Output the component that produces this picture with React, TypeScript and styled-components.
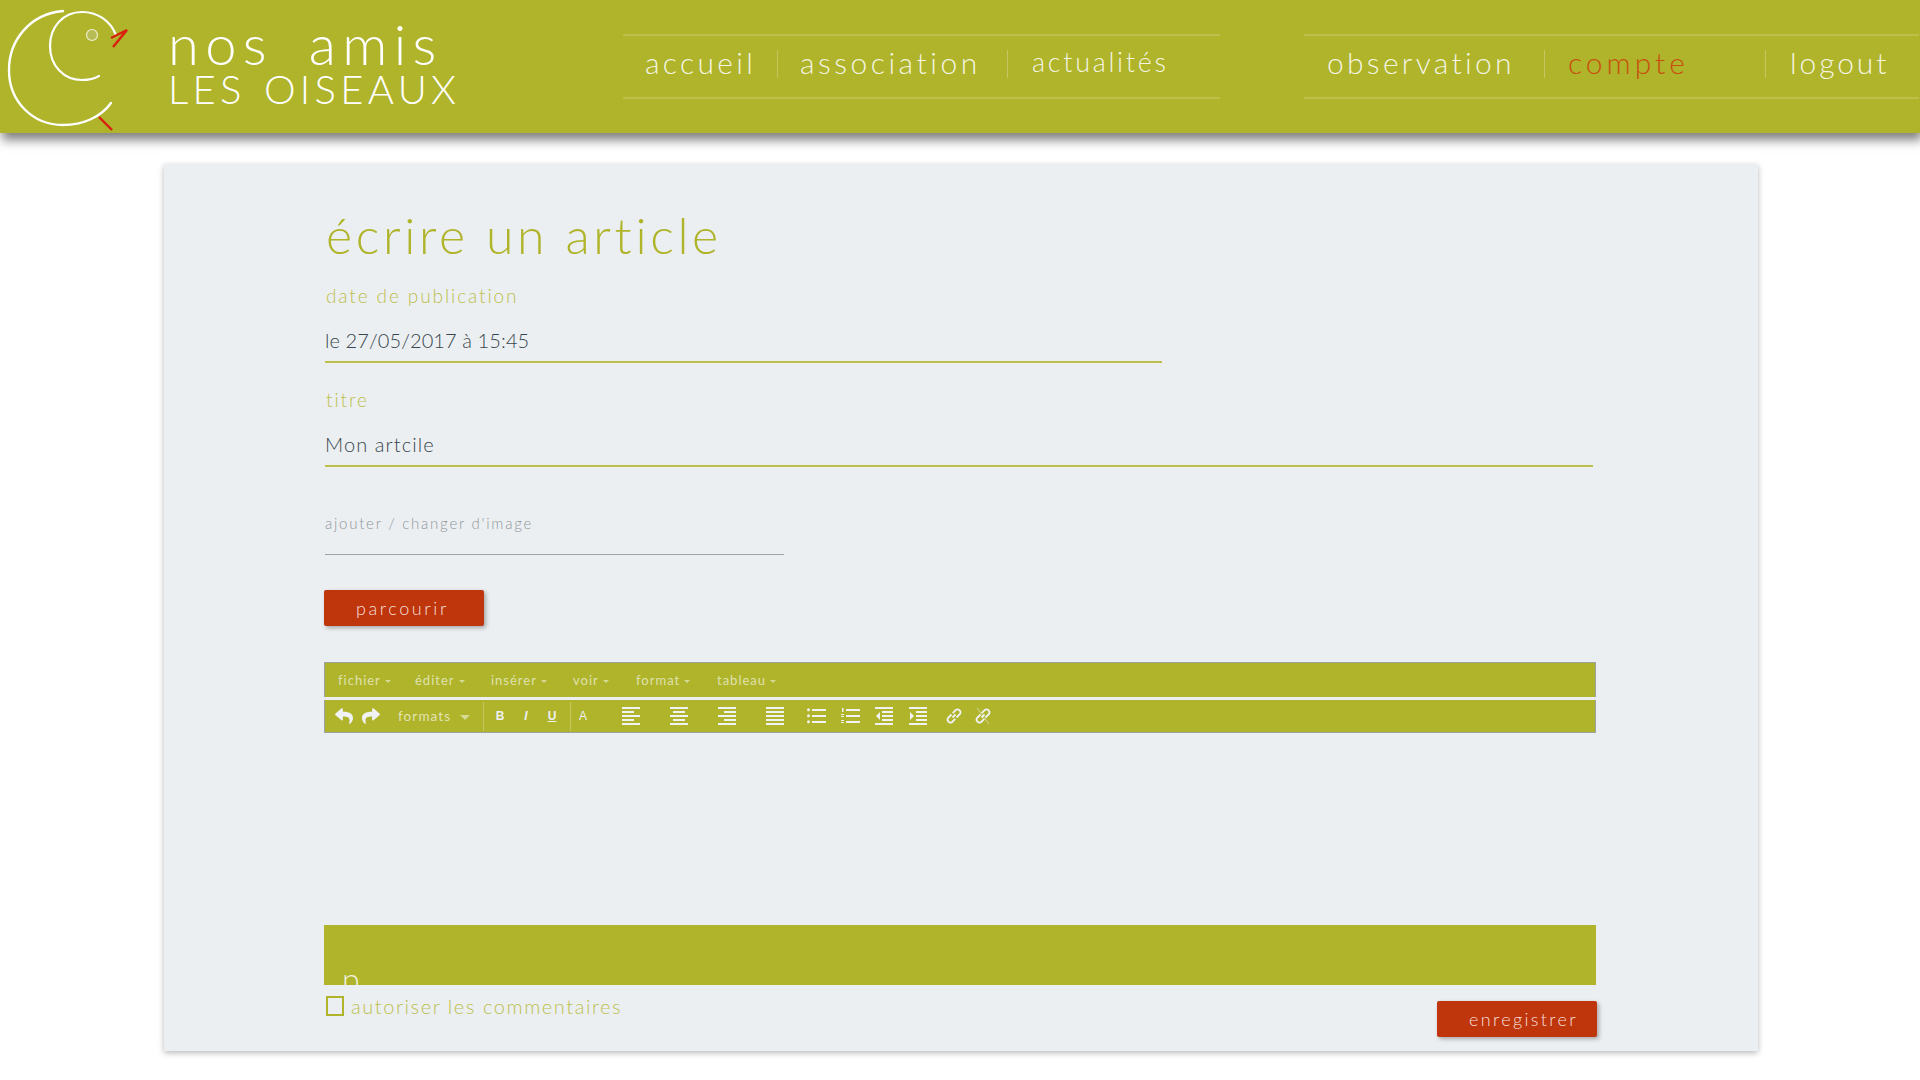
import React from "react";
import styled, { createGlobalStyle } from "styled-components";
import { FaReply, FaShare } from "react-icons/fa";

const olive = "#afb42b";
const red = "#bf360c";
const font = `"Lato", "Liberation Sans", sans-serif`;

const Global = createGlobalStyle`
  html, body { margin: 0; padding: 0; background: #fff; }
  body { font-family: ${font}; font-weight: 300; overflow: hidden; height: 1080px; }
  * { box-sizing: border-box; }
`;

const Header = styled.header`
  height: 133px;
  background: ${olive};
  box-shadow: 2px 7px 10px rgba(0, 0, 0, 0.5);
  display: flex;
  position: relative;
`;
const LogoMark = styled.svg`
  width: 140px;
  height: 133px;
  flex: none;
`;
const LogoText = styled.div`
  width: 483px;
  flex: none;
  padding: 19px 0 0 28px;
  color: #fff;
  font-weight: 300;
`;
const LogoLine1 = styled.div`
  font-size: 56px;
  line-height: 49px;
  height: 49px;
  letter-spacing: 6.4px;
  word-spacing: 14px;
`;
const LogoLine2 = styled.div`
  font-size: 40px;
  line-height: 42px;
  letter-spacing: 4.3px;
  word-spacing: 3px;
`;
const Nav = styled.nav<{ $w: number; $ml: number }>`
  width: ${(p) => p.$w}px;
  margin-left: ${(p) => p.$ml}px;
  height: 65px;
  margin-top: 34px;
  flex: none;
  display: flex;
  align-items: center;
  border-top: 2px solid rgba(255, 255, 255, 0.16);
  border-bottom: 2px solid rgba(255, 255, 255, 0.16);
`;
const NavItem = styled.a<{ $w: number; $size: number; $ls: number; $pl: number; $active?: boolean; $last?: boolean }>`
  flex: none;
  width: ${(p) => p.$w}px;
  height: 28px;
  margin-bottom: 6px;
  padding: 0 0 4px ${(p) => p.$pl}px;
  display: flex;
  align-items: center;
  white-space: nowrap;
  font-size: ${(p) => p.$size}px;
  letter-spacing: ${(p) => p.$ls}px;
  color: ${(p) => (p.$active ? "#c8500f" : "rgba(255,255,255,0.88)")};
  border-right: ${(p) => (p.$last ? "none" : "1px solid rgba(255,255,255,0.25)")};
`;

const Card = styled.main`
  width: 1594px;
  height: 887px;
  margin: 31px 0 0 164px;
  padding: 0 160px 0 160px;
  background: #eceff1;
  box-shadow: 0 2px 6px rgba(0, 0, 0, 0.28);
  display: flex;
  flex-direction: column;
`;
const Title = styled.h1`
  margin: 0 0 0 2px;
  padding-top: 41px;
  font-size: 50px;
  line-height: 60px;
  font-weight: 300;
  letter-spacing: 3.65px;
  color: ${olive};
`;
const Label = styled.label`
  display: block;
  margin-left: 1px;
  font-size: 19px;
  line-height: 22px;
  letter-spacing: 1.9px;
  color: #bcc04e;
`;
const Field = styled.div<{ $w: number; $top: number }>`
  width: ${(p) => p.$w}px;
  margin: ${(p) => p.$top}px 0 0 1px;
`;
const Value = styled.div<{ $ls: number }>`
  height: 56px;
  padding-top: 20px;
  font-size: 20px;
  line-height: 26px;
  font-weight: 300;
  letter-spacing: ${(p) => p.$ls}px;
  color: #37474f;
  border-bottom: 2px solid #bcc04a;
`;
const FileLabel = styled.div`
  width: 459px;
  height: 42px;
  margin: 46px 0 0 1px;
  font-size: 15px;
  line-height: 20px;
  font-weight: 300;
  letter-spacing: 1.75px;
  color: #8f979c;
  border-bottom: 1px solid #9ea4a6;
`;
const RedButton = styled.button<{ $pl: number; $ls: number }>`
  width: 160px;
  height: 36px;
  padding: 0 0 0 ${(p) => p.$pl}px;
  display: flex;
  align-items: center;
  border: none;
  border-radius: 2px;
  background: ${red};
  color: rgba(255, 255, 255, 0.85);
  font-family: ${font};
  font-weight: 300;
  font-size: 18px;
  letter-spacing: ${(p) => p.$ls}px;
  box-shadow: 2px 2px 4px rgba(0, 0, 0, 0.3);
`;
const Browse = styled.div`
  margin-top: 35px;
`;
const Editor = styled.section`
  width: 1272px;
  margin-top: 36px;
  display: flex;
  flex-direction: column;
`;
const MenuBar = styled.div`
  height: 35px;
  background: ${olive};
  border: 1px solid #9ca1a6;
  border-bottom: none;
  display: flex;
  align-items: center;
  padding-left: 13px;
`;
const MenuItem = styled.span<{ $w: number }>`
  width: ${(p) => p.$w}px;
  flex: none;
  display: flex;
  align-items: center;
  gap: 4px;
  font-size: 13px;
  font-weight: 400;
  letter-spacing: 1px;
  color: rgba(255, 255, 255, 0.62);
`;
const Caret = styled.i<{ $s?: number }>`
  width: 0;
  height: 0;
  margin-top: 2px;
  border-left: ${(p) => p.$s ?? 3}px solid transparent;
  border-right: ${(p) => p.$s ?? 3}px solid transparent;
  border-top: ${(p) => p.$s ?? 3}px solid rgba(255, 255, 255, 0.5);
`;
const ToolBar = styled.div`
  height: 33px;
  margin-top: 3px;
  background: ${olive};
  border: 1px solid #9ca1a6;
  border-top: none;
  display: flex;
  align-items: center;
  padding-left: 6px;
  color: #f0f2f3;
`;
const Tool = styled.span<{ $w: number }>`
  width: ${(p) => p.$w}px;
  height: 26px;
  flex: none;
  display: flex;
  align-items: center;
  justify-content: center;
`;
const Formats = styled.span`
  width: 98px;
  flex: none;
  padding-left: 13px;
  display: flex;
  align-items: center;
  gap: 9px;
  font-size: 13.5px;
  font-weight: 400;
  letter-spacing: 1.1px;
  color: rgba(255, 255, 255, 0.65);
`;
const Sep = styled.span<{ $ml?: number }>`
  width: 1px;
  height: 29px;
  flex: none;
  margin-left: ${(p) => p.$ml ?? 0}px;
  background: rgba(255, 255, 255, 0.25);
`;
const Glyph = styled.span<{ $kind?: "b" | "i" | "u"; $mr?: number }>`
  font-family: "Liberation Sans", sans-serif;
  font-size: 12px;
  font-weight: ${(p) => (p.$kind ? 700 : 400)};
  font-style: ${(p) => (p.$kind === "i" ? "italic" : "normal")};
  text-decoration: ${(p) => (p.$kind === "u" ? "underline" : "none")};
  margin-right: ${(p) => p.$mr ?? 0}px;
  color: #eef0f1;
`;
const Canvas = styled.div`
  height: 192px;
`;
const Status = styled.div`
  height: 60px;
  background: ${olive};
  overflow: hidden;
  padding: 36px 0 0 18px;
  color: rgba(255, 255, 255, 0.85);
  font-size: 32px;
  line-height: 36px;
`;
const Footer = styled.div`
  width: 1273px;
  display: flex;
  justify-content: space-between;
  align-items: flex-start;
`;
const Check = styled.div`
  display: flex;
  align-items: center;
  gap: 7px;
  margin: 11px 0 0 2px;
  font-size: 20px;
  line-height: 20px;
  letter-spacing: 1.57px;
  color: #bcc04e;
`;
const Box = styled.span`
  width: 18px;
  height: 20px;
  flex: none;
  border: 2px solid ${olive};
`;
const Save = styled.div`
  margin-top: 16px;
`;

const Bars = ({ rows }: { rows: [number, number][] }) => (
  <svg width="18" height="18" viewBox="0 0 18 18" fill="#f0f2f3">
    {rows.map(([x, w], i) => (
      <rect key={i} x={x} y={i * 4} width={w} height="2" />
    ))}
  </svg>
);
const Bullets = () => (
  <svg width="19" height="16" viewBox="0 0 19 16" fill="#f0f2f3">
    {[1, 7, 13].map((y) => (
      <g key={y}>
        <circle cx="1.5" cy={y + 0.8} r="1.5" />
        <rect x="5" y={y} width="14" height="2" />
      </g>
    ))}
  </svg>
);
const Numbers = () => (
  <svg width="19" height="16" viewBox="0 0 19 16" fill="#f0f2f3">
    <rect x="1" y="0" width="1.5" height="4" />
    <rect x="0" y="6" width="3" height="1" />
    <rect x="0" y="8" width="3" height="1" />
    <rect x="0" y="12" width="3" height="1" />
    <rect x="0" y="14" width="3" height="1" />
    {[1, 7, 13].map((y) => (
      <rect key={y} x="5" y={y} width="14" height="2" />
    ))}
  </svg>
);
const Indent = ({ flip }: { flip?: boolean }) => (
  <svg width="18" height="18" viewBox="0 0 18 18" fill="#f0f2f3">
    <rect x="0" y="0" width="18" height="2" />
    <rect x="0" y="16" width="18" height="2" />
    {[4, 8, 12].map((y) => (
      <rect key={y} x="7" y={y} width="11" height="2" />
    ))}
    <path d={flip ? "M1 5l4 4-4 4z" : "M5 5L1 9l4 4z"} />
  </svg>
);
const LinkIcon = ({ broken }: { broken?: boolean }) => (
  <svg width="18" height="18" viewBox="0 0 18 18" fill="none" stroke="#f0f2f3" strokeWidth="1.8">
    <path d="M7.5 10.5l3-3" />
    <path d="M6.5 7.5L3 11a3 3 0 0 0 4 4.2l3.3-3.4" />
    <path d="M11.5 10.5L15 7a3 3 0 0 0-4-4.2L7.7 6.2" />
    {broken && <path d="M3 1l12 16" strokeWidth="0.8" opacity="0.7" />}
  </svg>
);

const menus: [string, number][] = [
  ["fichier", 77],
  ["éditer", 76],
  ["insérer", 82],
  ["voir", 63],
  ["format", 81],
  ["tableau", 80],
];

export default function App() {
  return (
    <>
      <Global />
      <Header>
        <LogoMark viewBox="0 0 140 133" fill="none">
          <path d="M63 11C30 14 9 40 9 70c0 32 24 55 54 55 20 0 38-8 48-22" stroke="#fff" strokeWidth="2.4" strokeLinecap="round" />
          <path d="M116 35C110 20 97 12 82 12 63 12 50 27 50 46c0 20 14 34 32 34 6 0 12-1 17-4" stroke="#fff" strokeWidth="2.2" strokeLinecap="round" />
          <circle cx="92" cy="35" r="5.5" stroke="#eef0d0" strokeWidth="1.2" fill="#b8bc55" />
          <path d="M111 38l16-8-14 17" stroke="#d8200f" strokeWidth="2.4" />
          <path d="M99 117l13 13" stroke="#d8200f" strokeWidth="2.4" />
        </LogoMark>
        <LogoText>
          <LogoLine1>nos amis</LogoLine1>
          <LogoLine2>LES OISEAUX</LogoLine2>
        </LogoText>
        <Nav $w={597} $ml={0}>
          <NavItem $w={155} $pl={22} $size={30} $ls={3.3}>accueil</NavItem>
          <NavItem $w={230} $pl={22} $size={30} $ls={3.5}>association</NavItem>
          <NavItem $w={210} $pl={24} $size={27} $ls={2.7} $last>actualités</NavItem>
        </Nav>
        <Nav $w={615} $ml={84}>
          <NavItem $w={241} $pl={23} $size={30} $ls={3.3}>observation</NavItem>
          <NavItem $w={221} $pl={23} $size={30} $ls={4} $active>compte</NavItem>
          <NavItem $w={150} $pl={24} $size={30} $ls={2.9} $last>logout</NavItem>
        </Nav>
      </Header>
      <Card>
        <Title>écrire un article</Title>
        <Field $w={837} $top={20}>
          <Label>date de publication</Label>
          <Value $ls={0.1}>le 27/05/2017 à 15:45</Value>
        </Field>
        <Field $w={1268} $top={26}>
          <Label>titre</Label>
          <Value $ls={1.1}>Mon artcile</Value>
        </Field>
        <FileLabel>ajouter / changer d&apos;image</FileLabel>
        <Browse>
          <RedButton $pl={32} $ls={2.6}>parcourir</RedButton>
        </Browse>
        <Editor>
          <MenuBar>
            {menus.map(([m, w]) => (
              <MenuItem key={m} $w={w}>
                {m}
                <Caret />
              </MenuItem>
            ))}
          </MenuBar>
          <ToolBar>
            <Tool $w={26}><FaReply size={18} /></Tool>
            <Tool $w={28}><FaShare size={18} /></Tool>
            <Formats>
              formats
              <Caret $s={5} />
            </Formats>
            <Sep />
            <Tool $w={32}><Glyph $kind="b">B</Glyph></Tool>
            <Tool $w={20}><Glyph $kind="i">I</Glyph></Tool>
            <Tool $w={32}><Glyph $kind="u">U</Glyph></Tool>
            <Sep $ml={2} />
            <Tool $w={36}><Glyph $mr={12}>A</Glyph></Tool>
            <Tool $w={48}><Bars rows={[[0, 18], [0, 12], [0, 18], [0, 12], [0, 18]]} /></Tool>
            <Tool $w={48}><Bars rows={[[0, 18], [3, 12], [0, 18], [3, 12], [0, 18]]} /></Tool>
            <Tool $w={48}><Bars rows={[[0, 18], [6, 12], [0, 18], [6, 12], [0, 18]]} /></Tool>
            <Tool $w={48}><Bars rows={[[0, 18], [0, 18], [0, 18], [0, 18], [0, 18]]} /></Tool>
            <Tool $w={34}><Bullets /></Tool>
            <Tool $w={34}><Numbers /></Tool>
            <Tool $w={34}><Indent /></Tool>
            <Tool $w={34}><Indent flip /></Tool>
            <Tool $w={38}><LinkIcon /></Tool>
            <Tool $w={20}><LinkIcon broken /></Tool>
          </ToolBar>
          <Canvas />
          <Status>p</Status>
        </Editor>
        <Footer>
          <Check>
            <Box />
            autoriser les commentaires
          </Check>
          <Save>
            <RedButton $pl={32} $ls={2.35}>enregistrer</RedButton>
          </Save>
        </Footer>
      </Card>
    </>
  );
}
